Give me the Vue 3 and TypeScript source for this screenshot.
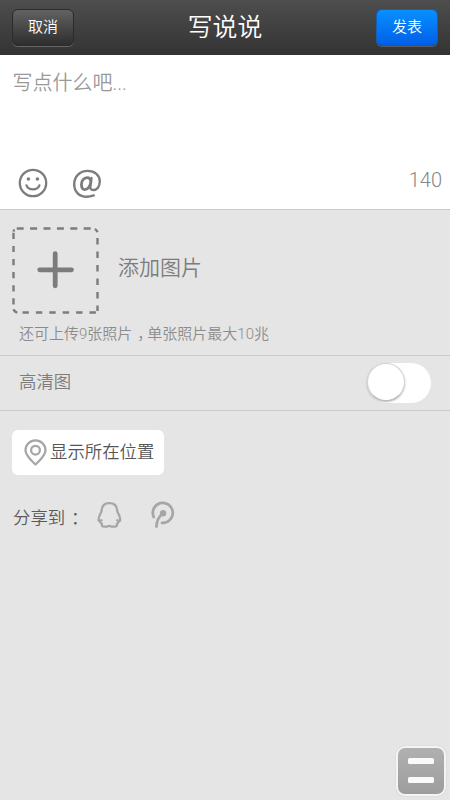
<script setup lang="ts">
import { computed, ref } from 'vue'

const content = ref('')
const limit = 140
const remaining = computed(() => limit - content.value.length)
const highQuality = ref(false)
</script>

<template>
  <div class="page">
    <header class="bar">
      <button class="btn cancel">取消</button>
      <h1 class="title">写说说</h1>
      <button class="btn publish">发表</button>
    </header>

    <section class="editor">
      <textarea v-model="content" class="input" placeholder="写点什么吧..."></textarea>
      <div class="tools">
        <svg class="face" width="30" height="30" viewBox="0 0 30 30" fill="none" stroke="#7d7d7d">
          <circle cx="15" cy="15" r="13.2" stroke-width="2.3" />
          <circle cx="10.4" cy="11" r="1.8" fill="#7d7d7d" stroke="none" />
          <circle cx="19.4" cy="11" r="1.8" fill="#7d7d7d" stroke="none" />
          <path d="M8.5 17.4C10.6 22.8 19.3 22.8 21.4 17.4" stroke-width="2.3" stroke-linecap="round" />
        </svg>
        <svg class="at" width="30" height="30" viewBox="0 0 30 30" fill="none" stroke="#7d7d7d" stroke-linecap="round">
          <path d="M21.8 27.4C19.4 28.2 17 28.7 14.7 28.7C7.2 28.7 2.2 23.7 2.2 16.3C2.2 8.5 8 2.9 15.6 2.9C22.8 2.9 27.8 7.3 27.8 13.5C27.8 18.6 24.9 22 21.4 22C18.9 22 18 20.6 18.3 18.2L19.5 10" stroke-width="2.4" />
          <path d="M18.9 14C18.6 10.9 17.1 9.6 15.1 9.6C11.8 9.6 9.4 12.9 9.4 16.6C9.4 19.6 10.7 21.6 12.9 21.6C15.7 21.6 18.5 18.2 18.9 14Z" stroke-width="2.8" />
        </svg>
        <span class="count">{{ remaining }}</span>
      </div>
    </section>

    <section class="photos">
      <div class="add-row">
        <svg class="add" width="87" height="87" viewBox="0 0 87 87" fill="none" stroke="#7c7c7c">
          <path d="M4.5 1.5H82.5" stroke-width="2.4" stroke-dasharray="7 6.4" stroke-dashoffset="-.2" />
          <path d="M10.5 85.5H84" stroke-width="2.4" stroke-dasharray="6.4 7" />
          <path d="M1.5 5.8V82" stroke-width="2.4" stroke-dasharray="6.2 6.9" />
          <path d="M85.5 11V84" stroke-width="2.4" stroke-dasharray="6.4 7.1" />
          <path d="M1.5 4.6Q1.7 3.2 2.7 2.7M82.7 2.2Q84.8 2.8 85.5 5.3M1.7 82.3Q2.2 84.8 5.3 85.6" stroke-width="2.4" />
          <path d="M27.7 42.8H59.5M43.2 26.7V58.8" stroke-width="4.8" stroke-linecap="round" />
        </svg>
        <span class="add-label">添加图片</span>
      </div>
      <p class="hint">还可上传9张照片<span class="mid">，</span>单张照片最大10兆</p>
    </section>

    <section class="quality">
      <span>高清图</span>
      <button class="switch" :class="{ on: highQuality }" @click="highQuality = !highQuality">
        <span class="knob"></span>
      </button>
    </section>

    <button class="location">
      <svg width="24" height="28" viewBox="0 0 24 28" fill="none" stroke="#a6a6a6" stroke-width="2.3" stroke-linejoin="round">
        <path d="M11.5 25.5C8.5 22.6 1.5 17 1.5 11.3A10 10 0 0 1 21.5 11.3C21.5 17 14.5 22.6 11.5 25.5Z" />
        <circle cx="11.5" cy="11.2" r="4.4" />
      </svg>
      <span>显示所在位置</span>
    </button>

    <div class="share">
      <span class="share-label">分享到<span class="mid">：</span></span>
      <svg class="qq" width="26" height="28" viewBox="0 0 26 28" fill="none" stroke="#a6a6a6" stroke-width="2.3" stroke-linecap="round" stroke-linejoin="round">
        <path d="M4.5 19.2C3 20.4 1.7 20.4 1.6 19.2C1.3 15.7 3.3 13 4.5 10.6C4.5 5.2 7.6 2.2 12.4 2.2S20.3 5.2 20.3 10.6C21.5 13 23.5 15.7 23.2 19.2C23.1 20.4 21.8 20.4 20.3 19.2" />
        <path d="M3.2 20.4C3.5 21.8 4.2 22.5 5 23C4.4 24.8 5.4 25.7 7 25.7H9.4C11 25.7 11 24.8 12.4 24.8S13.8 25.7 15.4 25.7H17.8C19.4 25.7 20.4 24.8 19.8 23C20.6 22.5 21.3 21.8 21.6 20.4" />
      </svg>
      <svg class="weibo" width="24" height="28" viewBox="0 0 24 28" fill="none" stroke="#a6a6a6" stroke-width="2.7">
        <path d="M2.7 16A10 10 0 1 1 11 21.8" stroke-linecap="round" />
        <circle cx="12.1" cy="12.3" r="3.2" fill="#a6a6a6" stroke="none" />
        <path d="M11.8 12.6C7.6 15.5 5.5 19.5 5.3 26.6" />
      </svg>
    </div>

    <button class="float-menu" aria-label="菜单"><i></i><i></i></button>
  </div>
</template>

<style>
body {
  margin: 0;
  background: #e5e5e5;
}
</style>

<style scoped>
.page {
  position: relative;
  box-sizing: border-box;
  width: 450px;
  height: 800px;
  overflow: hidden;
  background: #e5e5e5;
  color: #7c7c7c;
  font-family: Roboto, "Noto Sans CJK SC", sans-serif;
  font-weight: 350;
}
button {
  border: 0;
  padding: 0;
  font: inherit;
}
.bar {
  display: flex;
  box-sizing: border-box;
  height: 55px;
  padding: 9px 12px 0;
  justify-content: space-between;
  align-items: flex-start;
  background: linear-gradient(#4e4e4e, #333);
}
.btn {
  box-sizing: border-box;
  width: 62px;
  height: 37px;
  border-radius: 6px;
  color: #fff;
  font-size: 15px;
  line-height: 33px;
}
.cancel {
  border: 1px solid #2b2b2b;
  background: linear-gradient(#626262, #2e2e2e);
  box-shadow: 0 1px 0 #666;
}
.publish {
  border: 1px solid #1560b4;
  border-bottom-color: #1456b0;
  background: linear-gradient(#0890ff, #005fe8);
  box-shadow: 0 1px 0 #5c5c5c;
}
.title {
  margin: 1px 0 0;
  color: #fff;
  font-size: 24.8px;
  font-weight: 350;
  line-height: 36px;
}
.editor {
  display: flex;
  flex-direction: column;
  box-sizing: border-box;
  height: 155px;
  background: #fff;
  border-bottom: 1px solid #c9c9c9;
}
.input {
  display: block;
  flex: 1;
  border: 0;
  outline: 0;
  padding: 12px 12.5px;
  resize: none;
  background: transparent;
  color: #666;
  font: 350 20px/32px Roboto, "Noto Sans CJK SC", sans-serif;
}
.input::placeholder {
  color: #999;
  opacity: 1;
}
.tools {
  display: flex;
  height: 41px;
  padding: 0 8px 0 18px;
}
.at {
  margin-left: 24px;
}
.count {
  margin-left: auto;
  color: #868686;
  font-size: 20px;
  line-height: 24px;
}
.photos {
  box-sizing: border-box;
  height: 146px;
  padding: 17px 12px 0;
  border-bottom: 1px solid #cacaca;
}
.add-row {
  display: flex;
}
.add-label {
  margin-left: 19px;
  font-size: 21px;
  line-height: 82px;
}
.hint {
  margin: 8px 0 0 7px;
  color: #8c8c8c;
  font-size: 15px;
  line-height: 24px;
}
.mid {
  padding: 0 0.17em 0 0.33em;
  font-feature-settings: "halt";
}
.quality {
  display: flex;
  box-sizing: border-box;
  height: 55px;
  padding: 7px 19px 0 19px;
  justify-content: space-between;
  border-bottom: 1px solid #cacaca;
  font-size: 17.4px;
  line-height: 38px;
}
.switch {
  display: flex;
  width: 64px;
  height: 40px;
  border-radius: 20px;
  background: #fff;
}
.switch.on {
  justify-content: flex-end;
  background: #4cd964;
}
.knob {
  box-sizing: border-box;
  width: 38px;
  height: 38px;
  border: 1px solid #d5d5d5;
  border-bottom-color: #bbb;
  border-radius: 50%;
  background: #fff;
  box-shadow: 0 1px 2px rgba(0, 0, 0, 0.3);
}
.location {
  display: flex;
  width: 152px;
  height: 45px;
  margin: 19px 0 0 12px;
  padding: 9px 0 0 12px;
  box-sizing: border-box;
  border-radius: 6px;
  background: #fff;
  color: #555;
  font-size: 17.4px;
  line-height: 26px;
}
.location span {
  margin-left: 2px;
  white-space: nowrap;
}
.share {
  display: flex;
  padding: 26px 0 0 13px;
  color: #5a5a5a;
  font-size: 17.4px;
  line-height: 34px;
}
.share-label {
  flex: none;
  width: 70px;
  white-space: nowrap;
}
.qq {
  margin-left: 14px;
}
.weibo {
  margin-left: 28px;
}
.float-menu {
  position: absolute;
  left: 396px;
  top: 746px;
  display: flex;
  flex-direction: column;
  align-items: center;
  justify-content: center;
  gap: 13px;
  box-sizing: border-box;
  width: 50px;
  height: 50px;
  padding-bottom: 2px;
  border: 2px solid #f4f4f4;
  border-radius: 9px;
  background: linear-gradient(#b0b0b0, #9d9d9d);
  box-shadow: 0 0 1px #aaa;
}
.float-menu i {
  width: 26px;
  height: 6px;
  border-radius: 1.5px;
  background: #fafafa;
}
</style>
